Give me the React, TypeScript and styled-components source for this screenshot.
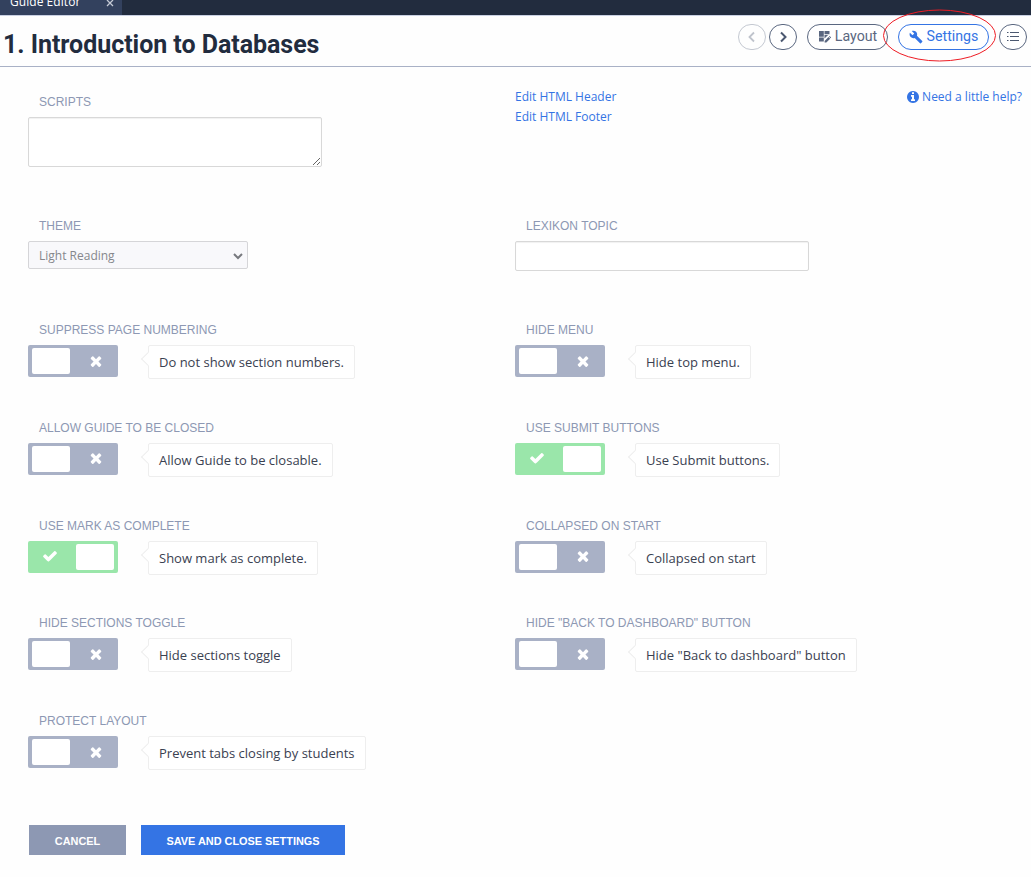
import React from "react";
import styled, { createGlobalStyle } from "styled-components";
import { MdBuild } from "react-icons/md";

const Global = createGlobalStyle`
  *, *::before, *::after { box-sizing: border-box; }
  body { margin: 0; background: #fff; font-family: "Open Sans", sans-serif; font-size: 13px; color: #3a4151; }
`;

const Page = styled.div`
  width: 1031px;
  height: 877px;
  overflow: hidden;
  background: #fefefe;
`;

const TabBar = styled.div`
  height: 15px;
  background: #222c3e;
  display: flex;
`;

const Tab = styled.div`
  width: 122px;
  height: 15px;
  padding: 0 8px 0 10px;
  display: flex;
  justify-content: space-between;
  background: #33415e;
  color: #fff;
  font-size: 12px;
  overflow: hidden;
  align-items: flex-end;
`;

const TabText = styled.span`
  height: 22px;
  line-height: 18px;
  letter-spacing: 0.05px;
`;

const TabClose = styled.svg`
  width: 8px;
  height: 8px;
  margin-bottom: 8px;
`;

const Header = styled.header`
  height: 52px;
  border-top: 1px solid #c9d0e2;
  border-bottom: 1px solid #a9b1c6;
  display: flex;
  justify-content: space-between;
  align-items: flex-start;
  padding: 8px 4px 0 3px;
`;

const Title = styled.h1`
  margin: 4px 0 0;
  font: 700 25px/33px Roboto, sans-serif;
  color: #222c3e;
  letter-spacing: -0.04px;
  white-space: nowrap;
`;

const Tools = styled.div`
  display: flex;
  align-items: center;
`;

const RoundButton = styled.button<{ $faded?: boolean; $gap?: number }>`
  width: 28px;
  height: 26px;
  padding: 0;
  margin-left: ${(p) => p.$gap ?? 0}px;
  border: 1px solid #5a6780;
  border-radius: 14px;
  background: #fff;
  color: #4b5870;
  display: flex;
  align-items: center;
  justify-content: center;
  opacity: ${(p) => (p.$faded ? 0.35 : 1)};
`;

const PillButton = styled.button<{ $active?: boolean; $w: number }>`
  position: relative;
  width: ${(p) => p.$w}px;
  height: 26px;
  margin-left: 10px;
  padding: 0 0 1px;
  border: 1px solid ${(p) => (p.$active ? "#3474e4" : "#5a6780")};
  border-radius: 13px;
  background: #fff;
  color: ${(p) => (p.$active ? "#3474e4" : "#5a6780")};
  font: 400 14.2px/19px Roboto, sans-serif;
  display: flex;
  align-items: center;
  justify-content: center;
  gap: 4px;
`;

const Ring = styled.svg`
  position: absolute;
  left: -16px;
  top: -16px;
  width: 113px;
  height: 54px;
  z-index: 1;
  pointer-events: none;
`;

const Body = styled.main`
  padding: 21px 9px 0 28px;
`;

const TopRow = styled.section<{ $h: number }>`
  display: grid;
  grid-template-columns: 487px 1fr;
  height: ${(p) => p.$h}px;
`;

const Label = styled.label`
  display: block;
  padding-left: 11px;
  height: 23px;
  font: 400 12px/16px "Liberation Sans", Arial, sans-serif;
  color: #8d98b3;
  white-space: nowrap;
`;

const Field = styled.div`
  padding-top: 6px;
`;

const ScriptBox = styled.textarea`
  display: block;
  width: 294px;
  height: 50px;
  border: 1px solid #d8d8d8;
  border-radius: 2px;
  background: #fff;
  box-shadow: inset 0 1px 1px rgba(0, 0, 0, 0.06);
  resize: both;
`;

const TopicInput = styled.input`
  display: block;
  width: 294px;
  height: 30px;
  border: 1px solid #d8d8d8;
  border-radius: 2px;
  background: #fff;
  box-shadow: inset 0 1px 1px rgba(0, 0, 0, 0.06);
`;

const ThemeSelect = styled.div`
  width: 220px;
  height: 28px;
  border: 1px solid #d5d5d8;
  border-radius: 2px;
  background: #f8f8fb;
  color: #85878c;
  padding: 1px 4px 0 10px;
  font-size: 12px;
  line-height: 27px;
  display: flex;
  align-items: center;
  justify-content: space-between;
`;

const Links = styled.div`
  display: flex;
  justify-content: space-between;
  margin-top: -1px;
  line-height: 20px;
  font-size: 12px;
  color: #3474e4;
`;

const LinkList = styled.div`
  display: flex;
  flex-direction: column;
`;

const Help = styled.span`
  display: flex;
  align-items: center;
  gap: 2px;
  height: 20px;
`;

const Options = styled.section`
  display: grid;
  grid-template-columns: 487px 1fr;
  grid-auto-rows: 97.75px;
  padding-top: 1px;
`;

const SwitchLine = styled.div`
  display: flex;
  align-items: flex-start;
`;

const Switch = styled.div<{ $on?: boolean }>`
  width: 90px;
  height: 32px;
  border-radius: 2px;
  padding: 3px 4px;
  display: flex;
  flex-direction: ${(p) => (p.$on ? "row-reverse" : "row")};
  background: ${(p) => (p.$on ? "#9ae6aa" : "#a9b1c6")};
`;

const Knob = styled.span`
  width: 38px;
  height: 26px;
  border-radius: 2px;
  background: #fff;
`;

const Mark = styled.span<{ $on?: boolean }>`
  flex: 1;
  display: flex;
  align-items: center;
  justify-content: center;
  padding: ${(p) => (p.$on ? "0 8px 1px 0" : "0 0 1px 8px")};
`;

const Note = styled.div`
  position: relative;
  margin-left: 30px;
  height: 34px;
  padding: 0 10px;
  border: 1px solid #eeeeee;
  border-radius: 2px;
  background: #fff;
  line-height: 33px;
  white-space: nowrap;
  color: #3a4151;
  &::before {
    content: "";
    position: absolute;
    left: -6px;
    top: 8px;
    width: 10px;
    height: 10px;
    border-left: 1px solid #eeeeee;
    border-bottom: 1px solid #eeeeee;
    background: #fff;
    transform: rotate(45deg);
  }
`;

const Actions = styled.div`
  display: flex;
  gap: 15px;
  padding: 14px 0 0 1px;
`;

const Action = styled.button<{ $primary?: boolean }>`
  width: ${(p) => (p.$primary ? 204 : 97)}px;
  height: 30px;
  border: 0;
  padding: 2px 0 0;
  color: #fff;
  background: ${(p) => (p.$primary ? "#3474e4" : "#8d98b3")};
  font: 700 10.9px/16px "Liberation Sans", Arial, sans-serif;
`;

const CHECK =
  "M1671 566q0 40-28 68l-724 724-136 136q-28 28-68 28t-68-28l-136-136-362-362q-28-28-28-68t28-68l136-136q28-28 68-28t68 28l294 295 656-657q28-28 68-28t68 28l136 136q28 28 28 68z";
const CROSS =
  "M1490 1322q0 40-28 68l-136 136q-28 28-68 28t-68-28l-294-294-294 294q-28 28-68 28t-68-28l-136-136q-28-28-28-68t28-68l294-294-294-294q-28-28-28-68t28-68l136-136q28-28 68-28t68 28l294 294 294-294q28-28 68-28t68 28l136 136q28 28 28 68t-28 68l-294 294 294 294q28 28 28 68z";

type Option = { label: string; note: string; on?: boolean };

const options: Option[] = [
  { label: "SUPPRESS PAGE NUMBERING", note: "Do not show section numbers." },
  { label: "HIDE MENU", note: "Hide top menu." },
  { label: "ALLOW GUIDE TO BE CLOSED", note: "Allow Guide to be closable." },
  { label: "USE SUBMIT BUTTONS", note: "Use Submit buttons.", on: true },
  { label: "USE MARK AS COMPLETE", note: "Show mark as complete.", on: true },
  { label: "COLLAPSED ON START", note: "Collapsed on start" },
  { label: "HIDE SECTIONS TOGGLE", note: "Hide sections toggle" },
  { label: 'HIDE "BACK TO DASHBOARD" BUTTON', note: 'Hide "Back to dashboard" button' },
  { label: "PROTECT LAYOUT", note: "Prevent tabs closing by students" },
];

function OptionField({ label, note, on }: Option) {
  return (
    <div>
      <Label>{label}</Label>
      <SwitchLine>
        <Switch $on={on}>
          <Knob />
          <Mark $on={on}>
            <svg width="16" height="16" viewBox="0 0 1792 1792" fill="#fff">
              <path d={on ? CHECK : CROSS} />
            </svg>
          </Mark>
        </Switch>
        <Note>{note}</Note>
      </SwitchLine>
    </div>
  );
}

export default function App() {
  return (
    <Page>
      <Global />
      <TabBar>
        <Tab>
          <TabText>Guide Editor</TabText>
          <TabClose viewBox="0 0 8 8" stroke="#c5cad6" strokeWidth="1.3">
            <path d="M1 1l6 6M7 1L1 7" />
          </TabClose>
        </Tab>
      </TabBar>
      <Header>
        <Title>1. Introduction to Databases</Title>
        <Tools>
          <RoundButton $faded>
            <svg width="12" height="12" viewBox="0 0 12 12" fill="none" stroke="currentColor" strokeWidth="1.8">
              <path d="M8 1.5L3.5 6 8 10.5" />
            </svg>
          </RoundButton>
          <RoundButton $gap={3}>
            <svg width="12" height="12" viewBox="0 0 12 12" fill="none" stroke="currentColor" strokeWidth="2">
              <path d="M4 1.5L8.5 6 4 10.5" />
            </svg>
          </RoundButton>
          <PillButton $w={81}>
            <svg width="13" height="13" viewBox="0 0 13 13" fill="currentColor">
              <path d="M1 1h4.8v5.8H1zM6.5 1h5v3.2h-5zM1 7.5h4.8v3.9H1zM6.5 5h3.6L6.5 8.6z" />
              <path d="M6.6 12.6v-1.7l3.9-3.9 1.7 1.7-3.9 3.9z" />
              <path d="M10.9 6.6l.7-.7 1.6 1.6-.7.7z" />
            </svg>
            Layout
          </PillButton>
          <PillButton $active $w={91}>
            <MdBuild size={14} />
            Settings
            <Ring viewBox="0 0 113 54" fill="none" stroke="#ee1c24" strokeWidth="1">
              <ellipse cx="56.5" cy="26.5" rx="56" ry="25.5" />
            </Ring>
          </PillButton>
          <RoundButton $gap={10}>
            <svg width="12" height="12" viewBox="0 0 12 12" fill="currentColor">
              <path d="M0 1h1.5v1H0zM3 1h9v1H3zM0 5h1.5v1H0zM3 5h9v1H3zM0 9h1.5v1H0zM3 9h9v1H3z" />
            </svg>
          </RoundButton>
        </Tools>
      </Header>
      <Body>
        <TopRow $h={124}>
          <Field>
            <Label>SCRIPTS</Label>
            <ScriptBox />
          </Field>
          <Links>
            <LinkList>
              <span>Edit HTML Header</span>
              <span>Edit HTML Footer</span>
            </LinkList>
            <Help>
              <svg width="14" height="14" viewBox="0 0 1792 1792" fill="currentColor">
                <path d="M1152 1376v-160q0-14-9-23t-23-9h-96v-512q0-14-9-23t-23-9h-320q-14 0-23 9t-9 23v160q0 14 9 23t23 9h96v320h-96q-14 0-23 9t-9 23v160q0 14 9 23t23 9h448q14 0 23-9t9-23zm-128-896v-160q0-14-9-23t-23-9h-192q-14 0-23 9t-9 23v160q0 14 9 23t23 9h192q14 0 23-9t9-23zm640 416q0 209-103 385.500t-279.500 279.500-385.500 103-385.500-103-279.500-279.500-103-385.500 103-385.500 279.500-279.500 385.500-103 385.500 103 279.500 279.500 103 385.500z" />
              </svg>
              Need a little help?
            </Help>
          </Links>
        </TopRow>
        <TopRow $h={109}>
          <Field>
            <Label>THEME</Label>
            <ThemeSelect>
              Light Reading
              <svg width="10" height="8" viewBox="0 0 10 8" fill="none" stroke="#77797e" strokeWidth="2">
                <path d="M1 2l4 4 4-4" />
              </svg>
            </ThemeSelect>
          </Field>
          <Field>
            <Label>LEXIKON TOPIC</Label>
            <TopicInput />
          </Field>
        </TopRow>
        <Options>
          {options.map((o) => (
            <OptionField key={o.label} {...o} />
          ))}
        </Options>
        <Actions>
          <Action>CANCEL</Action>
          <Action $primary>SAVE AND CLOSE SETTINGS</Action>
        </Actions>
      </Body>
    </Page>
  );
}
